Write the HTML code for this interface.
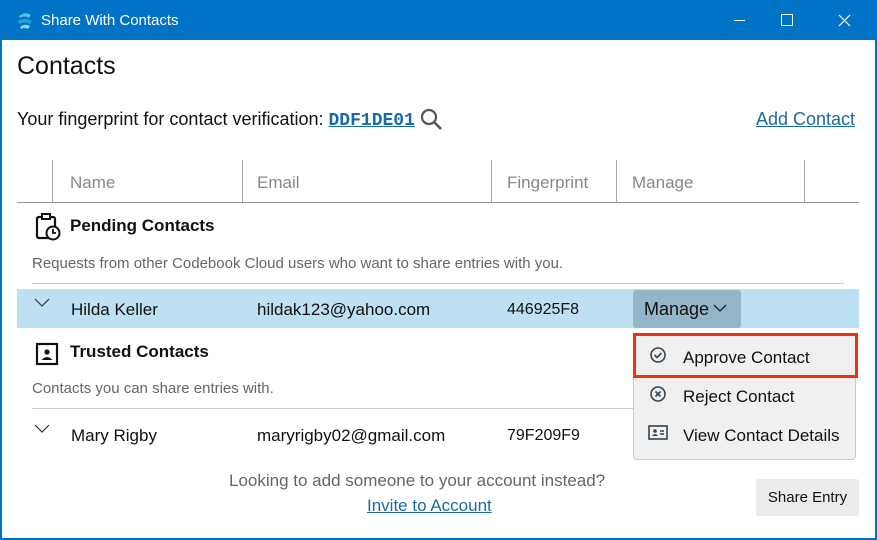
<!DOCTYPE html>
<html><head><style>
*{box-sizing:border-box;margin:0;padding:0}
body{width:877px;height:540px;overflow:hidden;background:#0173c7;font-family:"Liberation Sans",sans-serif;position:relative;color:#111}
.t{position:absolute;white-space:nowrap}
#win{position:absolute;left:2px;top:40px;width:873px;height:498px;background:#fff}
.hd{color:#888;font-size:17px}
.vl{position:absolute;width:1px;background:#aaa}
a{color:#1a6aa8;text-decoration:underline}
</style></head><body>
<svg class="t" style="left:16px;top:11px" width="18" height="20" viewBox="0 0 18 20"><path d="M3 5 Q9 0 15 4 L13 7 Q8 4 4 7Z" fill="#5ac0e8"/><path d="M2 10 Q9 6 16 10 L14 13 Q8 10 3 13Z" fill="#2aa0d8"/><path d="M4 16 Q9 12 14 15 L12 18 Q8 16 5 18Z" fill="#8ad8f4"/></svg>
<div class="t" style="left:41px;top:12px;font-size:15px;color:#fff">Share With Contacts</div>
<div class="t" style="left:734px;top:20px;width:11px;height:1px;background:#fff"></div>
<div class="t" style="left:781px;top:14px;width:12px;height:12px;border:1px solid #fff"></div>
<svg class="t" style="left:838px;top:14px" width="13" height="13"><path d="M1 1l11 11M12 1L1 12" stroke="#fff" stroke-width="1.2"/></svg>
<div id="win">
<div class="t" style="left:15px;top:12px;font-size:25px">Contacts</div>
<div class="t" style="left:15px;top:69px;font-size:18px">Your fingerprint for contact verification: <a style="font-family:'Liberation Mono',monospace;font-weight:bold;font-size:18px">DDF1DE01</a></div>
<svg class="t" style="left:418px;top:68px" width="24" height="24"><circle cx="9" cy="9" r="7" fill="none" stroke="#555" stroke-width="2.2"/><line x1="14" y1="14" x2="21" y2="21" stroke="#555" stroke-width="2.5"/></svg>
<a class="t" style="left:754px;top:69px;font-size:18px">Add Contact</a>
<div class="vl" style="left:50px;top:120px;height:42px"></div>
<div class="vl" style="left:240px;top:120px;height:42px"></div>
<div class="vl" style="left:489px;top:120px;height:42px"></div>
<div class="vl" style="left:614px;top:120px;height:42px"></div>
<div class="vl" style="left:802px;top:120px;height:42px"></div>
<div class="t" style="left:15px;top:162px;width:842px;height:1px;background:#999"></div>
<div class="t hd" style="left:68px;top:133px">Name</div>
<div class="t hd" style="left:255px;top:133px">Email</div>
<div class="t hd" style="left:505px;top:133px">Fingerprint</div>
<div class="t hd" style="left:630px;top:133px">Manage</div>
<svg class="t" style="left:33px;top:173px" width="26" height="28" viewBox="0 0 26 28"><rect x="2" y="4" width="18" height="21" rx="2" fill="none" stroke="#111" stroke-width="2.2"/><rect x="7" y="1" width="8" height="5" fill="#fff" stroke="#111" stroke-width="2"/><circle cx="18" cy="20" r="6.5" fill="#fff" stroke="#111" stroke-width="2"/><path d="M18 16v4h3" fill="none" stroke="#111" stroke-width="1.8"/></svg>
<div class="t" style="left:68px;top:176px;font-size:17px;font-weight:bold">Pending Contacts</div>
<div class="t" style="left:30px;top:215px;font-size:15px;color:#666">Requests from other Codebook Cloud users who want to share entries with you.</div>
<div class="t" style="left:30px;top:243px;width:812px;height:1px;background:#ccc"></div>
<div class="t" style="left:15px;top:249px;width:842px;height:39px;background:#bde0f3"></div>
<svg class="t" style="left:32px;top:258px" width="16" height="10"><path d="M1 1l7 7 7-7" fill="none" stroke="#333" stroke-width="1.2"/></svg>
<div class="t" style="left:69px;top:260px;font-size:17px">Hilda Keller</div>
<div class="t" style="left:255px;top:260px;font-size:17px">hildak123@yahoo.com</div>
<div class="t" style="left:505px;top:261px;font-size:16px">446925F8</div>
<div class="t" style="left:631px;top:250px;width:108px;height:38px;background:#93b5c8;border-radius:3px"></div>
<div class="t" style="left:642px;top:259px;font-size:18px">Manage</div>
<svg class="t" style="left:711px;top:263px" width="14" height="10"><path d="M1 2l6 6 6-6" fill="none" stroke="#222" stroke-width="1.3"/></svg>
<svg class="t" style="left:33px;top:302px" width="24" height="24"><rect x="2" y="2" width="20" height="20" fill="none" stroke="#111" stroke-width="2.2"/><circle cx="12" cy="10" r="2.6" fill="#111"/><path d="M6.5 18q5.5-6 11 0z" fill="#111"/></svg>
<div class="t" style="left:68px;top:302px;font-size:17px;font-weight:bold">Trusted Contacts</div>
<div class="t" style="left:30px;top:340px;font-size:15px;color:#666">Contacts you can share entries with.</div>
<div class="t" style="left:30px;top:368px;width:602px;height:1px;background:#ccc"></div>
<svg class="t" style="left:32px;top:384px" width="16" height="10"><path d="M1 1l7 7 7-7" fill="none" stroke="#333" stroke-width="1.2"/></svg>
<div class="t" style="left:69px;top:386px;font-size:17px">Mary Rigby</div>
<div class="t" style="left:255px;top:386px;font-size:17px">maryrigby02@gmail.com</div>
<div class="t" style="left:505px;top:387px;font-size:16px">79F209F9</div>
<div class="t" style="left:631px;top:293px;width:223px;height:127px;background:#f0f0f0;border:1px solid #ccc;border-radius:4px"></div>
<div class="t" style="left:631px;top:293px;width:225px;height:45px;border:3px solid #f0300e"></div>
<svg class="t" style="left:647px;top:306px" width="18" height="18"><circle cx="9" cy="9" r="7" fill="none" stroke="#345" stroke-width="1.6"/><path d="M5.5 9l2.5 2.5 4.5-4.5" fill="none" stroke="#345" stroke-width="1.6"/></svg>
<div class="t" style="left:681px;top:308px;font-size:17px">Approve Contact</div>
<svg class="t" style="left:647px;top:345px" width="18" height="18"><circle cx="9" cy="9" r="7" fill="none" stroke="#345" stroke-width="1.6"/><path d="M6.5 6.5l5 5M11.5 6.5l-5 5" stroke="#345" stroke-width="1.6"/></svg>
<div class="t" style="left:681px;top:347px;font-size:17px">Reject Contact</div>
<svg class="t" style="left:646px;top:385px" width="20" height="16"><rect x="1" y="1" width="18" height="13" fill="none" stroke="#345" stroke-width="1.6"/><circle cx="7" cy="6" r="1.8" fill="#345"/><path d="M4 11q3-4 6 0z" fill="#345"/><path d="M12 6h4M12 9h4" stroke="#345" stroke-width="1.4"/></svg>
<div class="t" style="left:681px;top:386px;font-size:17px">View Contact Details</div>
<div class="t" style="left:227px;top:431px;font-size:17px;color:#666">Looking to add someone to your account instead?</div>
<a class="t" style="left:365px;top:456px;font-size:17px">Invite to Account</a>
<div class="t" style="left:754px;top:439px;width:103px;height:37px;background:#ebebeb;border-radius:3px;font-size:15px;text-align:center;line-height:37px">Share Entry</div>
</div>
</body></html>
